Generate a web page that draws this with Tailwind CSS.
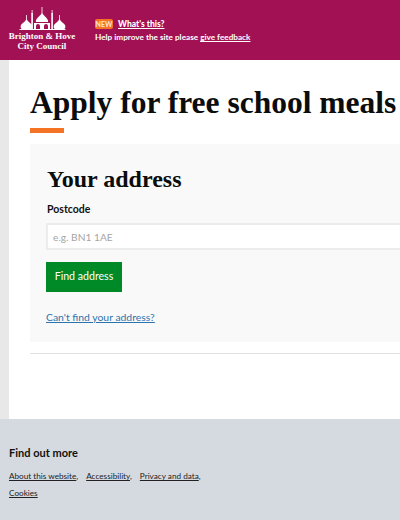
<!DOCTYPE html>
<html lang="en"><head><meta charset="utf-8">
<script src="https://cdn.jsdelivr.net/npm/@tailwindcss/browser@4"></script>
<title>Apply for free school meals</title></head>
<body class="w-[400px] h-[520px] overflow-hidden bg-white font-['Lato',sans-serif] text-[#111]">
<header class="h-[60px] bg-[#a31155] flex text-white">
  <div class="w-[95px] pt-[7px] flex flex-col items-start shrink-0">
    <svg class="w-[57px] h-[24px] ml-[14px]" viewBox="0 0 57 24" fill="#fff">
      <path d="M9 23c-2-1-3-3-2-5 1-2 4-3 5.500-6 1.500 3 4.500 4 5.500 6 1 2 0 4-2 5z"/>
      <path d="M42 23c-2-1-3-3-2-5 1-2 4-3 5.500-6 1.500 3 4.500 4 5.500 6 1 2 0 4-2 5z"/>
      <path d="M22 15c-1-3 4-6 6-9 2 3 7 6 6 9z"/>
      <path d="M20 23v-7h16v7z"/>
      <path d="M22 23v-4a2 2 0 0 1 4 0v4zM30 23v-4a2 2 0 0 1 4 0v4z" fill="#a31155"/>
      <path d="M5 23l1-1h45l1 1z"/>
      <rect x="17.300" y="6" width="1.600" height="16"/><rect x="37.300" y="6" width="1.600" height="16"/>
      <rect x="27.600" y="0" width="0.800" height="7"/><rect x="12.100" y="8" width="0.800" height="5"/><rect x="45.100" y="8" width="0.800" height="5"/>
      <rect x="17.700" y="3" width="0.800" height="4"/><rect x="37.700" y="3" width="0.800" height="4"/>
    </svg>
    <p class="w-[84px] text-center font-['Liberation_Serif',serif] font-bold text-[9px] leading-[10px] whitespace-nowrap">Brighton &amp; Hove<br>City Council</p>
  </div>
  <div class="pt-[18px] text-[8.2px] font-bold">
    <div class="flex items-center h-[12px]">
      <span class="bg-[#f47324] rounded-[2px] w-[18px] text-center h-[10px] leading-[10px] text-[7px] text-[#fde6d4]">NEW</span>
      <a href="#" class="ml-[5px] underline font-black text-[8.5px]">What's this?</a>
    </div>
    <p class="mt-[1px] leading-[12px] whitespace-nowrap">Help improve the site please <a href="#" class="underline">give feedback</a></p>
  </div>
</header>
<div class="flex h-[359px]">
  <div class="w-[9px] bg-[#e8e8e8] shrink-0"></div>
  <main class="flex-1 min-w-0 overflow-hidden pl-[21px] pt-[24px]">
    <h1 class="font-['Liberation_Serif',serif] font-bold text-[31.5px] leading-[38px] whitespace-nowrap text-[#0b0c0c]">Apply for free school meals</h1>
    <div class="mt-[6px] w-[34px] h-[5px] bg-[#f47324]"></div>
    <section class="mt-[11px] w-[500px] h-[198px] bg-[#f9f9f9] pl-[17px] pt-[22px]">
      <h2 class="font-['Liberation_Serif',serif] font-bold text-[24px] leading-[26px] text-[#0b0c0c]">Your address</h2>
      <label class="block mt-[10px] text-[10.5px] leading-[14px] font-bold">Postcode</label>
      <input class="block mt-[7px] -ml-px w-[460px] h-[27px] bg-white border-2 border-[#ececec] px-[5px] text-[10.2px] placeholder:text-[#a5a5a5]" placeholder="e.g. BN1 1AE">
      <button class="block mt-[12px] -ml-px w-[76px] h-[30px] bg-[#008a27] text-white text-[10.6px]">Find address</button>
      <a href="#" class="block mt-[18px] -ml-px text-[10.4px] leading-[14px] underline text-[#2d73ac] w-max">Can't find your address?</a>
    </section>
    <div class="mt-[11px] w-[500px] h-[1px] bg-[#e2e2e2]"></div>
  </main>
</div>
<footer class="h-[101px] bg-[#d5dae0] pl-[9px] pt-[27px]">
  <h3 class="text-[11px] leading-[14px] font-bold text-[#111]">Find out more</h3>
  <ul class="mt-[9px] flex flex-wrap gap-x-[8px] gap-y-[3px] text-[8.2px] leading-[14px] w-[300px] text-[#222]">
    <li><a href="#" class="underline">About this website</a>,</li>
    <li><a href="#" class="underline">Accessibility</a>,</li>
    <li><a href="#" class="underline">Privacy and data</a>,</li>
    <li class="w-full"><a href="#" class="underline">Cookies</a></li>
  </ul>
</footer>
</body></html>
